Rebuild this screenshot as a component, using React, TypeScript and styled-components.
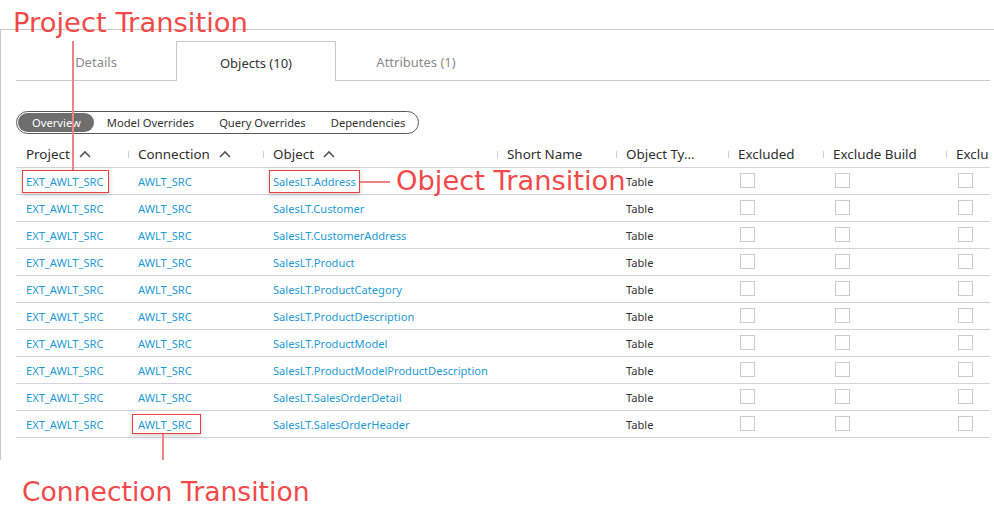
import React from "react";
import styled, { createGlobalStyle } from "styled-components";

const GlobalStyle = createGlobalStyle`
  html, body { margin: 0; padding: 0; background: #fff; }
  body { font-family: "Noto Sans", "Open Sans", sans-serif; color: #333; }
`;

const Page = styled.div`
  position: relative;
  width: 994px;
  height: 522px;
  overflow: hidden;
  background: #fff;
  padding-top: 29px;
  box-sizing: border-box;
`;

const Panel = styled.div`
  border-top: 1px solid #c8c8c8;
  border-left: 1px solid #c8c8c8;
  height: 431px;
  box-sizing: border-box;
  padding: 11px 4px 0 15px;
`;

const TabBar = styled.div`
  display: flex;
  height: 40px;
  box-sizing: border-box;
  border-bottom: 1px solid #c8c8c8;
`;

const Tab = styled.div<{ $active?: boolean }>`
  width: 160px;
  height: ${(p) => (p.$active ? "40px" : "39px")};
  box-sizing: border-box;
  display: flex;
  align-items: center;
  justify-content: center;
  font-size: 13px;
  color: ${(p) => (p.$active ? "#333" : "#8a8a8a")};
  background: #fff;
  border: ${(p) => (p.$active ? "1px solid #c8c8c8" : "1px solid transparent")};
  border-bottom: none;
  padding-top: 2px;
`;

const Segmented = styled.div`
  display: inline-flex;
  margin-top: 30px;
  height: 23px;
  box-sizing: border-box;
  border: 1px solid #5a5a5a;
  border-radius: 12px;
  padding: 1px;
  align-items: stretch;
`;

const Segment = styled.div<{ $active?: boolean }>`
  display: flex;
  align-items: center;
  padding: ${(p) => (p.$active ? "0 13px 0 14px" : "0 12px 0 13px")};
  border-radius: 10px;
  font-size: 11.2px;
  color: ${(p) => (p.$active ? "#fff" : "#333")};
  background: ${(p) => (p.$active ? "#6e6e6e" : "transparent")};
`;

const Table = styled.div`
  margin-top: 7px;
  width: 974px;
  overflow: hidden;
`;

const cols = "112px 135px 234px 119px 112px 95px 123px 60px";

const HeaderRow = styled.div`
  display: grid;
  grid-template-columns: ${cols};
  height: 27px;
  box-sizing: border-box;
  border-bottom: 1px solid #d2d2de;
`;

const HeaderCell = styled.div<{ $sep?: boolean }>`
  position: relative;
  display: flex;
  align-items: center;
  padding-left: 10px;
  padding-bottom: 1px;
  font-size: 13.4px;
  color: #2e2e2e;
  white-space: nowrap;
  overflow: hidden;
  &::before {
    content: "";
    display: ${(p) => (p.$sep ? "block" : "none")};
    position: absolute;
    left: 0;
    top: 10px;
    width: 1px;
    height: 7px;
    background: #cfcfcf;
  }
`;

const SortIcon = styled.svg`
  margin-left: 9px;
  flex: none;
`;

const Row = styled.div`
  display: grid;
  grid-template-columns: ${cols};
  height: 27px;
  box-sizing: border-box;
  border-bottom: 1px solid #d2d2de;
`;

const Cell = styled.div`
  display: flex;
  align-items: center;
  padding-left: 10px;
  font-size: 11.1px;
  color: #333;
  white-space: nowrap;
`;

const Link = styled.span`
  color: #1d9ad6;
`;

const Check = styled.span`
  display: block;
  width: 15px;
  height: 15px;
  box-sizing: border-box;
  border: 1px solid #cbcbcb;
  margin-left: 2px;
  margin-top: -1px;
`;

const Note = styled.div<{ $x: number; $y: number; $size: number }>`
  position: absolute;
  left: ${(p) => p.$x}px;
  top: ${(p) => p.$y}px;
  font-family: "DejaVu Sans", Verdana, sans-serif;
  font-size: ${(p) => p.$size}px;
  line-height: 26px;
  color: #f24a4a;
  white-space: nowrap;
`;

const Box = styled.div<{ $x: number; $y: number; $w: number; $h: number }>`
  position: absolute;
  left: ${(p) => p.$x}px;
  top: ${(p) => p.$y}px;
  width: ${(p) => p.$w}px;
  height: ${(p) => p.$h}px;
  box-sizing: border-box;
  border: 1px solid #e8413f;
  box-shadow: 0 2px 5px rgba(0, 0, 0, 0.18);
`;

const Line = styled.div<{ $x: number; $y: number; $w: number; $h: number }>`
  position: absolute;
  left: ${(p) => p.$x}px;
  top: ${(p) => p.$y}px;
  width: ${(p) => p.$w}px;
  height: ${(p) => p.$h}px;
  background: #f08282;
`;

const Sort = () => (
  <SortIcon width="12" height="8" viewBox="0 0 12 8">
    <polyline points="1,7 6,2 11,7" fill="none" stroke="#555" strokeWidth="1.6" />
  </SortIcon>
);

const objects = [
  "SalesLT.Address",
  "SalesLT.Customer",
  "SalesLT.CustomerAddress",
  "SalesLT.Product",
  "SalesLT.ProductCategory",
  "SalesLT.ProductDescription",
  "SalesLT.ProductModel",
  "SalesLT.ProductModelProductDescription",
  "SalesLT.SalesOrderDetail",
  "SalesLT.SalesOrderHeader",
];

export default function App() {
  return (
    <>
      <GlobalStyle />
      <Page>
        <Panel>
          <TabBar>
            <Tab>Details</Tab>
            <Tab $active>Objects (10)</Tab>
            <Tab>Attributes (1)</Tab>
          </TabBar>
          <Segmented>
            <Segment $active>Overview</Segment>
            <Segment>Model Overrides</Segment>
            <Segment>Query Overrides</Segment>
            <Segment>Dependencies</Segment>
          </Segmented>
          <Table>
            <HeaderRow>
              <HeaderCell>Project<Sort /></HeaderCell>
              <HeaderCell $sep>Connection<Sort /></HeaderCell>
              <HeaderCell $sep>Object<Sort /></HeaderCell>
              <HeaderCell $sep>Short Name</HeaderCell>
              <HeaderCell $sep>Object Ty...</HeaderCell>
              <HeaderCell $sep>Excluded</HeaderCell>
              <HeaderCell $sep>Exclude Build</HeaderCell>
              <HeaderCell $sep>Exclu</HeaderCell>
            </HeaderRow>
            {objects.map((o) => (
              <Row key={o}>
                <Cell><Link>EXT_AWLT_SRC</Link></Cell>
                <Cell><Link>AWLT_SRC</Link></Cell>
                <Cell><Link>{o}</Link></Cell>
                <Cell />
                <Cell>Table</Cell>
                <Cell><Check /></Cell>
                <Cell><Check /></Cell>
                <Cell><Check /></Cell>
              </Row>
            ))}
          </Table>
        </Panel>

        <Note $x={13} $y={10} $size={27.4}>Project Transition</Note>
        <Line $x={72} $y={41} $w={2} $h={129} />
        <Box $x={22} $y={170} $w={87} $h={23} />

        <Box $x={269} $y={170} $w={91} $h={23} />
        <Line $x={360} $y={181} $w={30} $h={2} />
        <Note $x={396} $y={168} $size={27.3}>Object Transition</Note>

        <Box $x={132} $y={414} $w={69} $h={20} />
        <Line $x={162} $y={434} $w={2} $h={26} />
        <Note $x={22} $y={479} $size={26.6}>Connection Transition</Note>
      </Page>
    </>
  );
}
